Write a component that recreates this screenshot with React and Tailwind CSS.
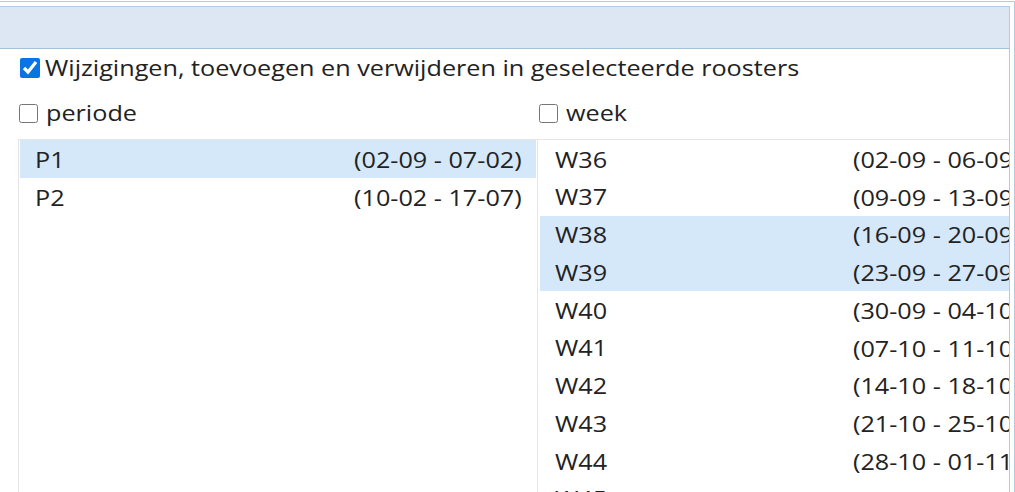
import React from "react";

const periods = [
  { n: "P1", d: "(02-09 - 07-02)", sel: true },
  { n: "P2", d: "(10-02 - 17-07)", sel: false },
];

const weeks = [
  { n: "W36", d: "(02-09 - 06-09)" },
  { n: "W37", d: "(09-09 - 13-09)" },
  { n: "W38", d: "(16-09 - 20-09)", sel: true },
  { n: "W39", d: "(23-09 - 27-09)", sel: true },
  { n: "W40", d: "(30-09 - 04-10)" },
  { n: "W41", d: "(07-10 - 11-10)" },
  { n: "W42", d: "(14-10 - 18-10)" },
  { n: "W43", d: "(21-10 - 25-10)" },
  { n: "W44", d: "(28-10 - 01-11)" },
  { n: "W45", d: "(04-11 - 08-11)" },
];

function L({ children }) {
  return <span className="inline-block origin-left scale-x-[1.2] leading-none whitespace-nowrap">{children}</span>;
}
function R({ children }) {
  return <span className="inline-block origin-right scale-x-[1.2] leading-none whitespace-nowrap">{children}</span>;
}

export default function App() {
  return (
    <div className="w-[1015px] h-[492px] overflow-hidden bg-white font-['Open_Sans',sans-serif] text-[#222] text-[21px]">
      <div className="mt-[1px] h-[491px] border-t border-r border-[#b3cbe0] pt-[4px] pr-[4px]">
        <div className="h-full border-t border-r border-[#b3cbe0] overflow-hidden flex flex-col">
          <div className="h-[42px] shrink-0 bg-[#dce7f3] border-b border-[#a7c1d8]" />
          <div className="flex shrink-0 items-center h-[40px] pl-[20px]">
            <input type="checkbox" checked readOnly className="w-[20px] h-[20px] m-0 -translate-y-[1px] accent-[#0b74e5]" />
            <span className="ml-[5px]">
              <L>Wijzigingen, toevoegen en verwijderen in geselecteerde roosters</L>
            </span>
          </div>
          <div className="flex shrink-0 h-[50px] items-center">
            <div className="w-[520px] flex items-center pl-[19px]">
              <input type="checkbox" readOnly className="w-[19px] h-[19px] m-0 -translate-y-[1px]" />
              <span className="ml-[8px]">
                <L>periode</L>
              </span>
            </div>
            <div className="flex items-center pl-[19px]">
              <input type="checkbox" readOnly className="w-[19px] h-[19px] m-0 -translate-y-[1px]" />
              <span className="ml-[8px]">
                <L>week</L>
              </span>
            </div>
          </div>
          <div className="flex flex-1 min-h-0 ml-[18px] border-t border-[#e6e6e6]">
            <div className="w-[519px] shrink-0 border-l border-[#e3e3e3] pl-[1px] pr-[1px]">
              {periods.map((p) => (
                <div
                  key={p.n}
                  className={
                    "h-[37.75px] flex items-center justify-between pt-[3px] pl-[15px] pr-[14px] " +
                    (p.sel ? "bg-[#d5e8f9]" : "")
                  }
                >
                  <L>{p.n}</L>
                  <R>{p.d}</R>
                </div>
              ))}
            </div>
            <div className="flex-1 border-l border-[#e6e6e6] pl-[2px] min-w-0">
              {weeks.map((w) => (
                <div
                  key={w.n}
                  className={
                    "h-[37.75px] flex items-center pt-[3px] pl-[15px] whitespace-nowrap w-[560px] " +
                    (w.sel ? "bg-[#d5e8f9]" : "")
                  }
                >
                  <span className="w-[298px] shrink-0">
                    <L>{w.n}</L>
                  </span>
                  <L>{w.d}</L>
                </div>
              ))}
            </div>
          </div>
        </div>
      </div>
    </div>
  );
}
